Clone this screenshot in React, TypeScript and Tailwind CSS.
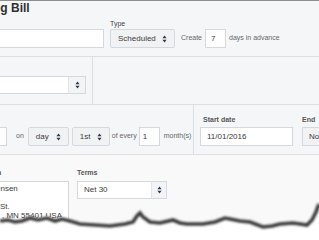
import React from "react";

const Arrows = () => (
  <svg width="5" height="8" viewBox="0 0 5 8">
    <path d="M2.5 0.6 L4.6 3.2 H0.4Z M2.5 7.4 L4.6 4.8 H0.4Z" fill="#2e3b4c" />
  </svg>
);

const GraySelect = ({ text, w }: { text: string; w: string }) => (
  <div
    className={`${w} h-[19px] flex items-center justify-between pl-[7px] pr-[7px] bg-[#f1f2f4] border border-[#d5d8dc] rounded-[2px] text-[8px]`}
  >
    <span>{text}</span>
    <Arrows />
  </div>
);

export default function App() {
  return (
    <div className="relative w-[319px] h-[240px] overflow-hidden bg-[#f5f6f8] text-[#3b3b3b] font-['Liberation_Sans',Arial,sans-serif]">
      <div className="h-px bg-[#8e8e8e]" />
      {/* Section 1 */}
      <div className="h-[56px] border-b border-[#dcdfe3]">
        <div className="h-[15px] text-[12px] leading-[14px] font-bold text-[#2f2f2f] whitespace-nowrap overflow-hidden">
          <span className="ml-[-49px]">Recurring Bill</span>
        </div>
        <div className="flex items-end mt-[4px] whitespace-nowrap">
          <div className="w-[104px] h-[19px] bg-white border border-l-0 border-[#d5d8dc]" />
          <div className="ml-[6px] flex flex-col">
            <div className="h-[8px] mb-px text-[7px] leading-[8px] text-[#444]">Type</div>
            <GraySelect text="Scheduled" w="w-[65px]" />
          </div>
          <div className="h-[19px] flex items-center ml-[6px] text-[7px] text-[#666]">Create</div>
          <div className="ml-[3px] w-[21px] h-[19px] bg-white border border-[#d5d8dc] flex items-center pl-[5px] text-[8px]">7</div>
          <div className="h-[19px] flex items-center ml-[3px] text-[7px] text-[#666]">days in advance</div>
        </div>
      </div>
      {/* Section 2 */}
      <div className="h-[48px] flex border-b border-[#dcdfe3]">
        <div className="w-[93px] shrink-0 border-r border-[#dcdfe3] pt-[19px]">
          <div className="w-[86px] h-[18px] flex bg-white border border-l-0 border-[#d5d8dc]">
            <div className="flex-1" />
            <div className="w-[17px] h-full flex items-center justify-center bg-[#f3f4f6] border-l border-[#e2e4e8]">
              <Arrows />
            </div>
          </div>
        </div>
        <div className="flex-1" />
      </div>
      {/* Section 3 */}
      <div className="h-[50px] flex border-b border-[#dcdfe3]">
        <div className="w-[194px] shrink-0 border-r border-[#dcdfe3] flex items-end pb-[8px] whitespace-nowrap">
          <div className="w-[7px] h-[19px] bg-white border border-l-0 border-[#d5d8dc]" />
          <div className="h-[19px] flex items-center ml-[9px] text-[7px] text-[#666]">on</div>
          <div className="ml-[4px]"><GraySelect text="day" w="w-[41px]" /></div>
          <div className="ml-[3px]"><GraySelect text="1st" w="w-[38px]" /></div>
          <div className="h-[19px] flex items-center ml-[2px] text-[7px] text-[#666]">of every</div>
          <div className="ml-[2px] w-[21px] h-[19px] bg-white border border-[#d5d8dc] flex items-center pl-[3px] text-[8px]">1</div>
          <div className="h-[19px] flex items-center ml-[4px] text-[7px] text-[#666]">month(s)</div>
        </div>
        <div className="flex-1 min-w-0 overflow-hidden flex items-end pb-[8px] pl-[6px] whitespace-nowrap">
          <div className="flex flex-col shrink-0">
            <div className="h-[8px] mb-[3px] pl-[3px] text-[7px] leading-[8px] font-bold text-[#555]">Start date</div>
            <div className="w-[93px] h-[19px] bg-white border border-[#d5d8dc] flex items-center pl-[6px] text-[8px]">11/01/2016</div>
          </div>
          <div className="flex flex-col ml-[9px] shrink-0">
            <div className="h-[8px] mb-[3px] text-[7px] leading-[8px] font-bold text-[#555]">End</div>
            <div className="w-[40px] h-[19px] bg-[#f1f2f4] border border-[#d5d8dc] flex items-center pl-[6px] text-[8px]">None</div>
          </div>
        </div>
      </div>
      {/* Section 4 */}
      <div className="flex pt-[14px] bg-[#f9f9fa] h-[100px]">
        <div className="flex flex-col">
          <div className="h-[8px] mb-[4px] text-[7px] leading-[8px] font-bold text-[#555] overflow-hidden whitespace-nowrap">
            <span className="ml-[-3px]">n</span>
          </div>
          <div className="w-[69px] h-[60px] bg-white border border-l-0 border-[#d5d8dc] text-[8px] leading-[9px] pt-[2px] whitespace-nowrap overflow-hidden">
            <div className="ml-[-8px]">Jensen</div>
            <div>&nbsp;</div>
            <div>St.</div>
            <div className="ml-[2px]">, MN 55401 USA</div>
          </div>
        </div>
        <div className="flex flex-col ml-[8px]">
          <div className="h-[8px] mb-[4px] text-[7px] leading-[8px] font-bold text-[#555]">Terms</div>
          <div className="w-[90px] h-[18px] flex bg-white border border-[#d5d8dc]">
            <div className="flex-1 flex items-center pl-[6px] text-[8px]">Net 30</div>
            <div className="w-[15px] h-full flex items-center justify-center bg-[#f3f4f6] border-l border-[#e2e4e8]">
              <Arrows />
            </div>
          </div>
        </div>
      </div>
      {/* Torn edge */}
      <svg className="absolute left-0 top-[190px]" width="319" height="50" viewBox="0 0 319 50">
        <defs>
          <filter id="b" x="-5%" y="-50%" width="110%" height="200%">
            <feGaussianBlur stdDeviation="0.9" />
          </filter>
        </defs>
        <path
          d="M0 29 L8 28 L15 30 L22 29 L30 26 L38 28 L47 26 L55 29 L62 27 L70 29 L80 32 L95 33 L110 34 L125 32 L133 30 L137 24 L140 21 L143 25 L150 30 L160 31 L173 28 L180 31 L187 32 L203 32 L215 30 L225 26 L230 27 L240 29 L250 30 L263 35 L272 34 L280 32 L293 31 L300 32 L307 33 L312 28 L316 20 L319 12 L319 50 L0 50Z"
          fill="#ffffff"
        />
        <path
          d="M0 31 L8 30 L15 32 L22 31 L30 28 L38 30 L47 28 L55 31 L62 29 L70 31 L80 34 L95 35 L110 36 L125 34 L133 32 L137 26 L140 23 L143 27 L150 32 L160 33 L173 30 L180 33 L187 34 L203 34 L215 32 L225 28 L230 29 L240 31 L250 32 L263 37 L272 36 L280 34 L293 33 L300 34 L307 35 L312 30 L316 22 L319 14"
          fill="none"
          stroke="#3a3a3a"
          strokeWidth="3.6"
          filter="url(#b)"
        />
      </svg>
    </div>
  );
}
